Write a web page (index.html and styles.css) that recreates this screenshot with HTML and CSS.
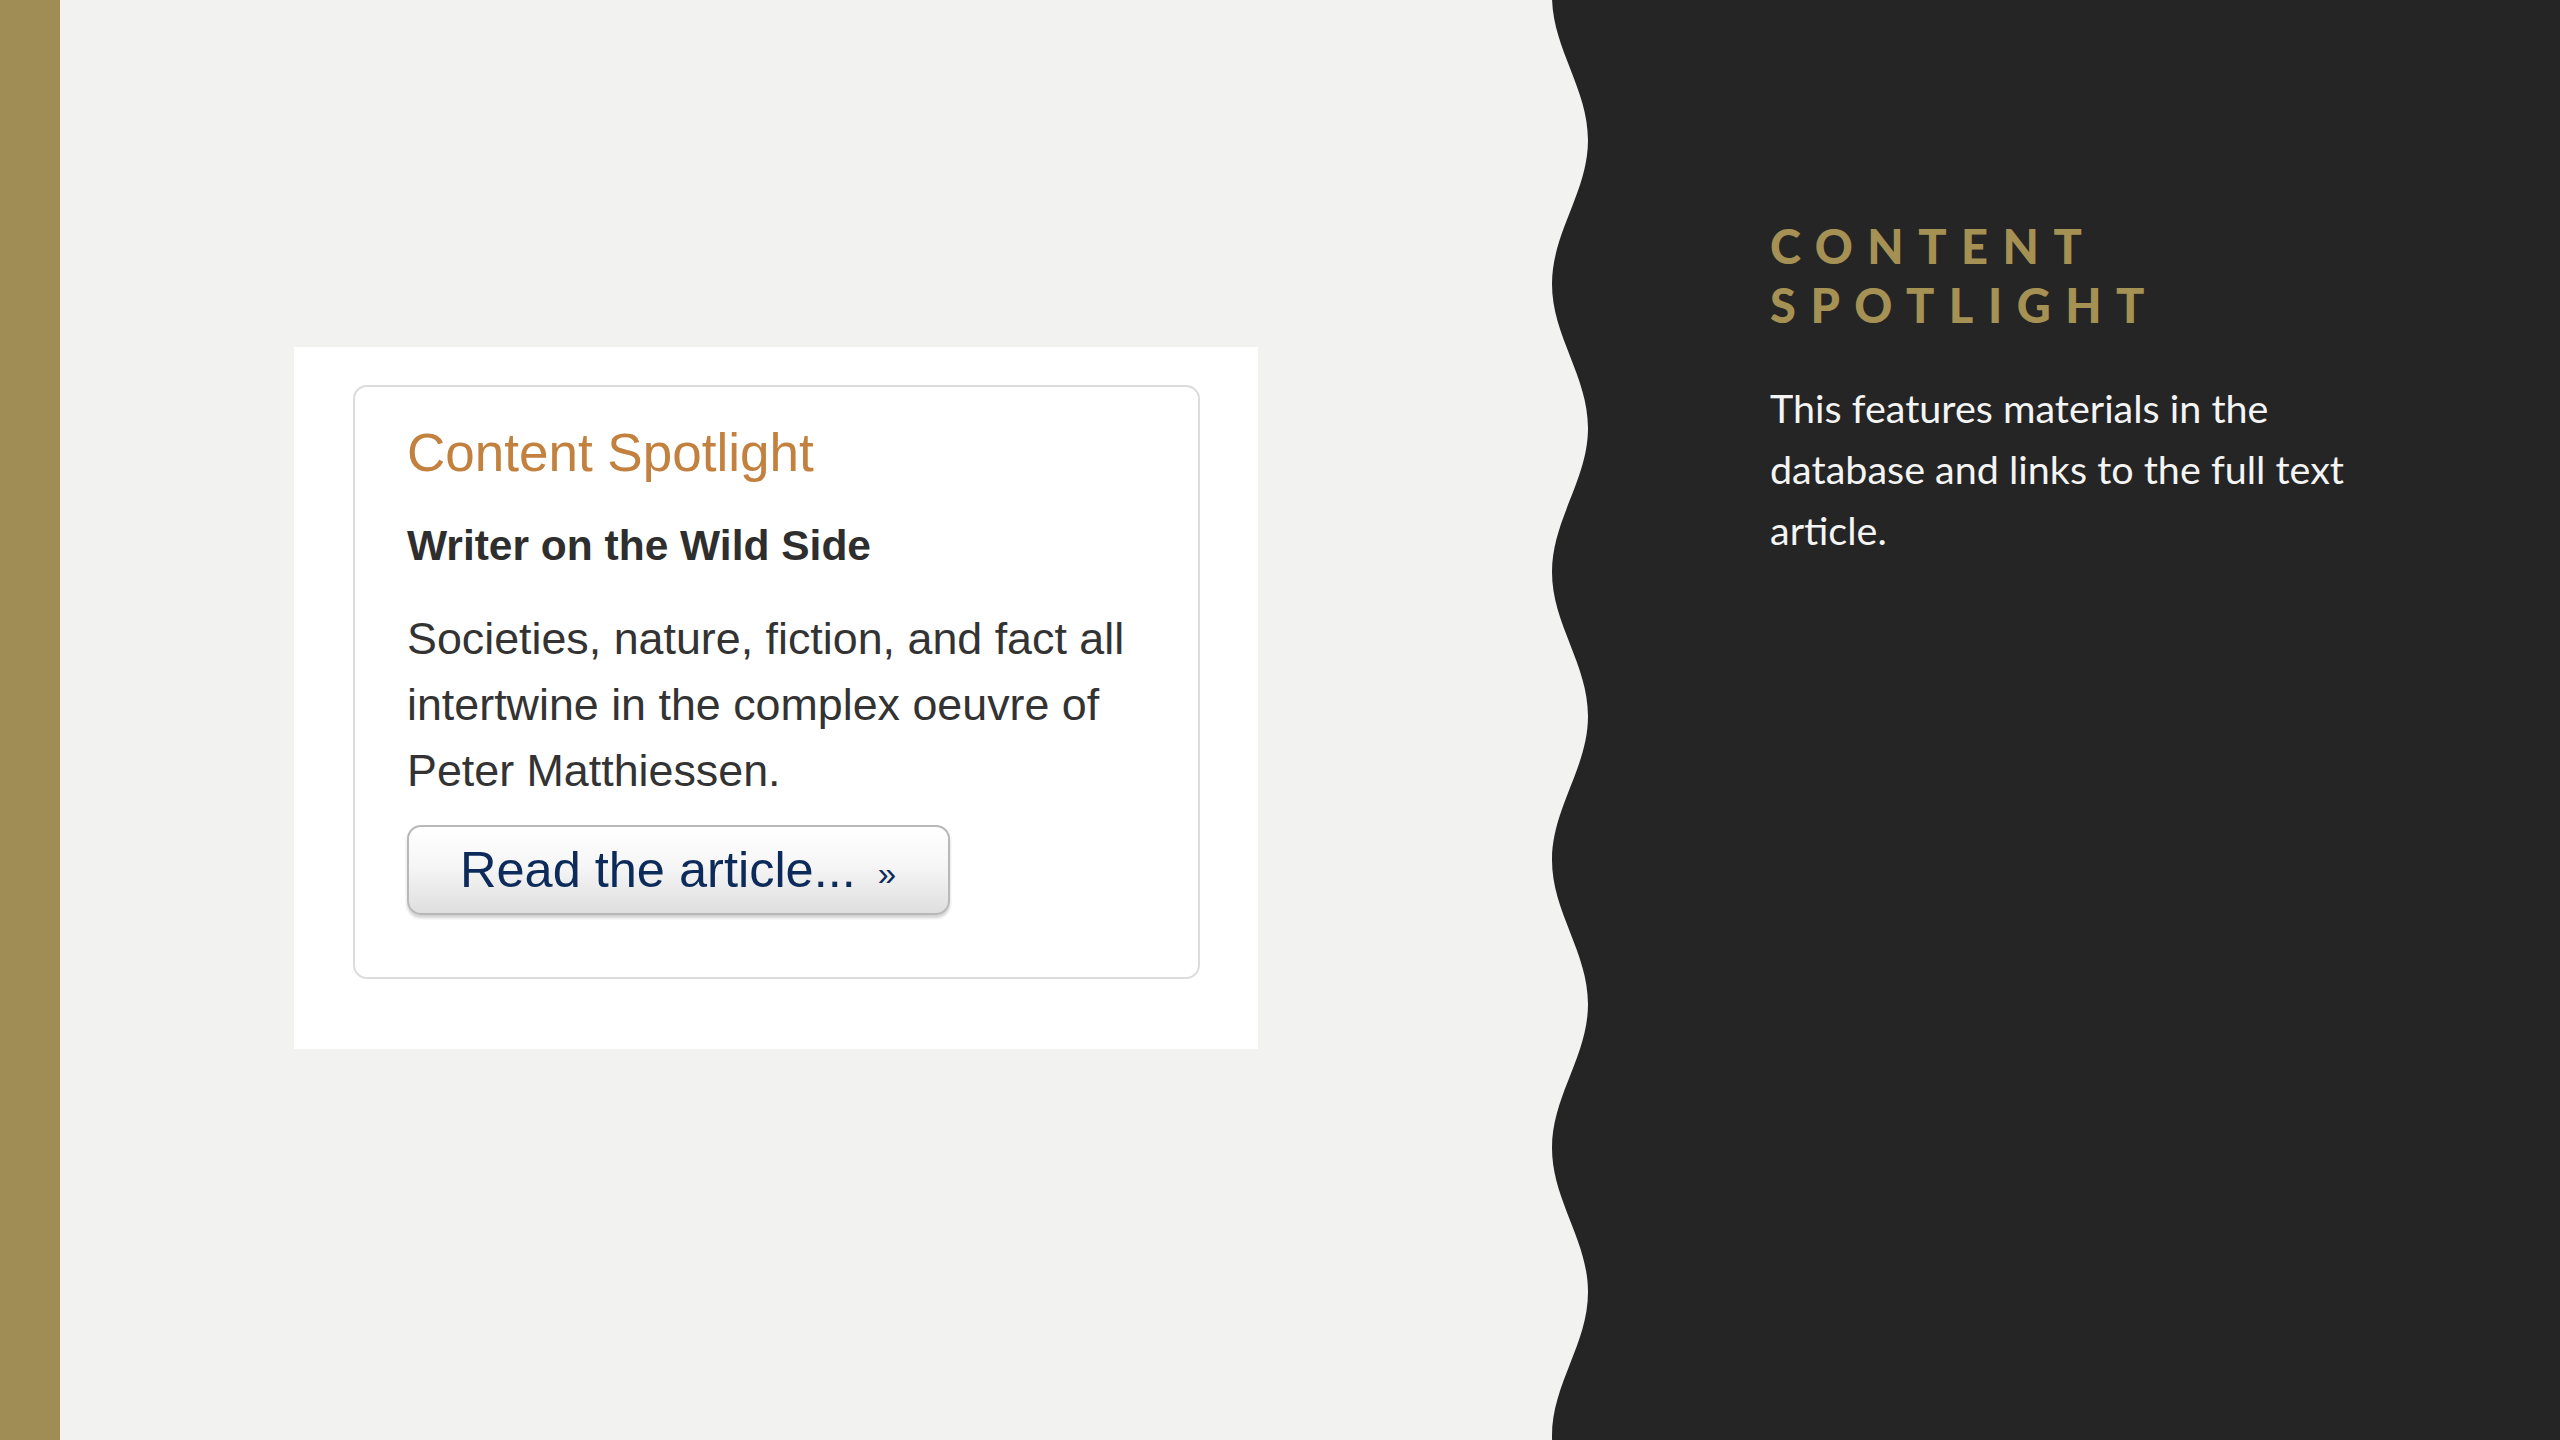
FILE: index.html
```html
<!DOCTYPE html>
<html lang="en">
<head>
<meta charset="utf-8">
<title>Content Spotlight</title>
<link rel="stylesheet" href="styles.css">
</head>
<body>
<div class="slide">
  <div class="accent"></div>
  <main class="stage">
    <section class="card">
      <div class="spotlight">
        <h2 class="spot-title">Content Spotlight</h2>
        <h3 class="spot-sub">Writer on the Wild Side</h3>
        <p class="spot-text">Societies, nature, fiction, and fact all intertwine in the complex oeuvre of Peter Matthiessen.</p>
        <a class="spot-btn" href="#">Read the article...<span class="raquo">»</span></a>
      </div>
    </section>
  </main>
  <aside class="panel">
    <svg class="wave" width="40" height="1440" viewBox="0 0 40 1440" preserveAspectRatio="none" aria-hidden="true">
      <path fill="#252525" d="M40 -4 L1 -4 C1 48 37 88 37 140 C37 192 1 232 1 284 C1 336 37 376 37 428 C37 480 1 520 1 572 C1 624 37 664 37 716 C37 768 1 808 1 860 C1 912 37 952 37 1004 C37 1056 1 1096 1 1148 C1 1200 37 1240 37 1292 C37 1344 1 1384 1 1436 C1 1488 37 1528 37 1580 L40 1580 Z"/>
    </svg>
    <div class="panel-body">
      <h1 class="panel-title">Content Spotlight</h1>
      <p class="panel-text">This features materials in the database and links to the full text article.</p>
    </div>
  </aside>
</div>
</body>
</html>
```

FILE: styles.css
```css
html, body {
  margin: 0;
  padding: 0;
}
body {
  width: 2560px;
  height: 1440px;
  overflow: hidden;
  background: #f2f2f0;
}
.slide {
  display: flex;
  width: 2560px;
  height: 1440px;
}
.accent {
  width: 60px;
  flex-shrink: 0;
  background: #a08d55;
}
.stage {
  flex: 1;
  display: flex;
  align-items: flex-start;
  padding: 347px 0 0 234px;
  box-sizing: border-box;
}
.card {
  background: #ffffff;
  padding: 38px 58px 70px 59px;
}
.spotlight {
  width: 847px;
  box-sizing: border-box;
  border: 2px solid #dcdcdc;
  border-radius: 14px;
  padding: 36px 40px 62px 52px;
  font-family: "Liberation Sans", Arial, sans-serif;
  display: flex;
  flex-direction: column;
  align-items: flex-start;
}
.spot-title {
  margin: 0;
  font-size: 53px;
  line-height: 60px;
  font-weight: normal;
  color: #c2813f;
}
.spot-sub {
  margin: 39px 0 0;
  font-size: 42.5px;
  line-height: 48px;
  font-weight: bold;
  color: #2e2e2e;
}
.spot-text {
  margin: 35px 0 0;
  font-size: 44.8px;
  line-height: 66px;
  color: #333333;
}
.spot-btn {
  margin-top: 22px;
  display: flex;
  align-items: center;
  width: 543px;
  height: 90px;
  box-sizing: border-box;
  padding-left: 51px;
  border: 2px solid #b8b8b8;
  border-radius: 14px;
  background: linear-gradient(#ffffff 0%, #f6f6f6 45%, #dedede 100%);
  box-shadow: 0 3px 3px rgba(0, 0, 0, 0.18);
  color: #0c2a5a;
  font-size: 50.5px;
  line-height: 86px;
  text-decoration: none;
}
.raquo {
  font-size: 33px;
  margin-left: 22px;
  position: relative;
  top: 4px;
}
.panel {
  width: 1009px;
  flex-shrink: 0;
  display: flex;
}
.wave {
  display: block;
  width: 40px;
  height: 1440px;
  flex-shrink: 0;
}
.panel-body {
  flex: 1;
  background: #252525;
  padding: 217px 0 0 179px;
  box-sizing: border-box;
}
.panel-title {
  margin: 0;
  width: 640px;
  font-family: Lato, "Open Sans", sans-serif;
  font-weight: 900;
  font-size: 47px;
  line-height: 59px;
  letter-spacing: 14.5px;
  text-transform: uppercase;
  color: #a69154;
}
.panel-text {
  margin: 42px 0 0;
  width: 620px;
  font-family: Lato, "Open Sans", sans-serif;
  font-size: 39.5px;
  line-height: 61px;
  color: #f4f4f4;
}
```
